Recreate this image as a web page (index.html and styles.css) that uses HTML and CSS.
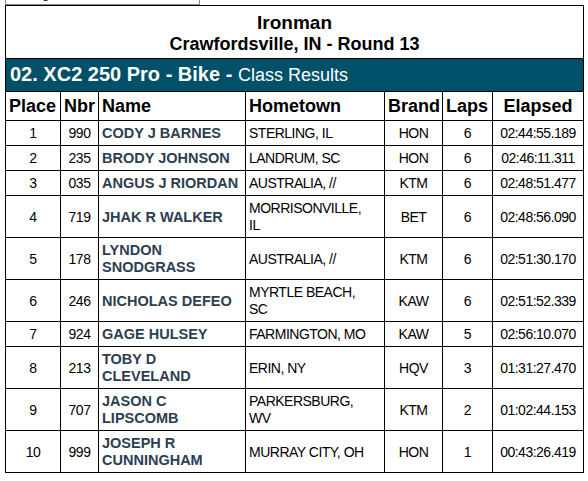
FILE: index.html
```html
<!DOCTYPE html>
<html>
<head>
<meta charset="utf-8">
<title>Ironman - Class Results</title>
<link rel="stylesheet" href="styles.css">
</head>
<body>
<div class="tab">Page</div>
<table class="results">
  <colgroup>
    <col class="c-place"><col class="c-nbr"><col class="c-name"><col class="c-home"><col class="c-brand"><col class="c-laps"><col class="c-time">
  </colgroup>
  <tr>
    <td colspan="7" class="title">
      <div class="event">Ironman</div>
      <div class="venue">Crawfordsville, IN - Round 13</div>
    </td>
  </tr>
  <tr>
    <td colspan="7" class="bar"><b>02. XC2 250 Pro - Bike - </b><span>Class Results</span></td>
  </tr>
  <tr class="head">
    <th>Place</th><th>Nbr</th><th>Name</th><th>Hometown</th><th>Brand</th><th>Laps</th><th class="center">Elapsed</th>
  </tr>
  <tr><td class="ctr">1</td><td class="ctr">990</td><td class="name">CODY J BARNES</td><td class="home">STERLING, IL</td><td class="ctr">HON</td><td class="ctr">6</td><td class="ctr">02:44:55.189</td></tr>
  <tr><td class="ctr">2</td><td class="ctr">235</td><td class="name">BRODY JOHNSON</td><td class="home">LANDRUM, SC</td><td class="ctr">HON</td><td class="ctr">6</td><td class="ctr">02:46:11.311</td></tr>
  <tr><td class="ctr">3</td><td class="ctr">035</td><td class="name">ANGUS J RIORDAN</td><td class="home">AUSTRALIA, //</td><td class="ctr">KTM</td><td class="ctr">6</td><td class="ctr">02:48:51.477</td></tr>
  <tr><td class="ctr">4</td><td class="ctr">719</td><td class="name">JHAK R WALKER</td><td class="home">MORRISONVILLE, IL</td><td class="ctr">BET</td><td class="ctr">6</td><td class="ctr">02:48:56.090</td></tr>
  <tr><td class="ctr">5</td><td class="ctr">178</td><td class="name">LYNDON SNODGRASS</td><td class="home">AUSTRALIA, //</td><td class="ctr">KTM</td><td class="ctr">6</td><td class="ctr">02:51:30.170</td></tr>
  <tr><td class="ctr">6</td><td class="ctr">246</td><td class="name">NICHOLAS DEFEO</td><td class="home">MYRTLE BEACH, SC</td><td class="ctr">KAW</td><td class="ctr">6</td><td class="ctr">02:51:52.339</td></tr>
  <tr><td class="ctr">7</td><td class="ctr">924</td><td class="name">GAGE HULSEY</td><td class="home">FARMINGTON, MO</td><td class="ctr">KAW</td><td class="ctr">5</td><td class="ctr">02:56:10.070</td></tr>
  <tr><td class="ctr">8</td><td class="ctr">213</td><td class="name">TOBY D CLEVELAND</td><td class="home">ERIN, NY</td><td class="ctr">HQV</td><td class="ctr">3</td><td class="ctr">01:31:27.470</td></tr>
  <tr><td class="ctr">9</td><td class="ctr">707</td><td class="name">JASON C LIPSCOMB</td><td class="home">PARKERSBURG, WV</td><td class="ctr">KTM</td><td class="ctr">2</td><td class="ctr">01:02:44.153</td></tr>
  <tr><td class="ctr">10</td><td class="ctr">999</td><td class="name">JOSEPH R CUNNINGHAM</td><td class="home">MURRAY CITY, OH</td><td class="ctr">HON</td><td class="ctr">1</td><td class="ctr">00:43:26.419</td></tr>
</table>
</body>
</html>
```

FILE: styles.css
```css
html, body {
  background: #fff;
}
body {
  margin: 0;
  padding: 0 5px;
  font-family: "Liberation Sans", Arial, sans-serif;
  color: #000;
}
.tab {
  width: 173px;
  height: 18px;
  margin-top: -17px;
  padding: 2px 0 0 20px;
  border: 1px solid #888;
  font-size: 13px;
  line-height: 15px;
  box-sizing: content-box;
}
.results {
  width: 578px;
  border-collapse: collapse;
  table-layout: fixed;
  border: 1px solid #000;
}
.results td, .results th {
  border: 1px solid #000;
}
.c-place { width: 55px; }
.c-nbr { width: 38px; }
.c-name { width: 147px; }
.c-home { width: 139px; }
.c-brand { width: 58px; }
.c-laps { width: 50px; }
.c-time { width: 91px; }

.title {
  text-align: center;
  font-weight: bold;
  padding: 5px 0 3px;
}
.event {
  font-size: 19px;
  line-height: 23px;
}
.venue {
  font-size: 18px;
  line-height: 21px;
}
.bar {
  background: #005069;
  color: #fff;
  padding: 4px 4px;
  line-height: 23px;
}
.bar b {
  font-size: 20px;
}
.bar span {
  font-size: 18px;
}
.head th {
  font-size: 18px;
  font-weight: bold;
  text-align: left;
  line-height: 21px;
  padding: 4px 3px 3px;
  white-space: nowrap;
  overflow: hidden;
}
.head th.center {
  text-align: center;
}
.results td.ctr, .results td.home {
  font-size: 14px;
  letter-spacing: -0.5px;
  line-height: 17px;
  padding: 4px 3px 3px;
}
.results td.ctr {
  text-align: center;
  padding: 4px 0 3px;
}
.results td.home {
  padding-right: 11px;
}
.results td.name {
  font-size: 14.5px;
  font-weight: bold;
  line-height: 17px;
  color: #2c3e50;
  padding: 4px 1px 3px 3px;
}
```
